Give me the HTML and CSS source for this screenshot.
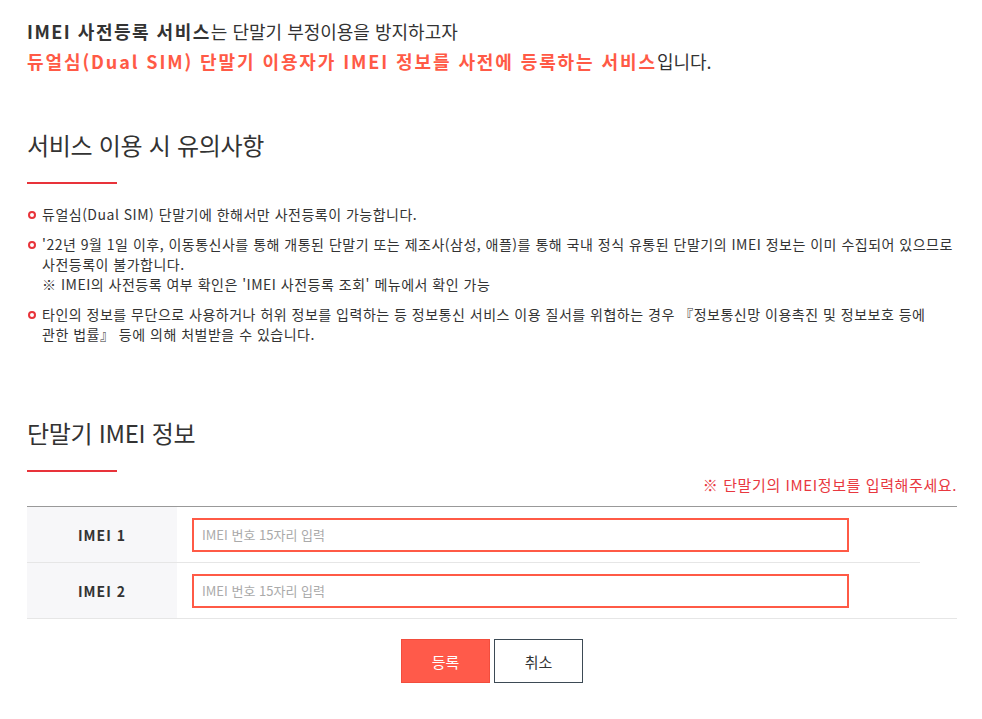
FILE: index.html
```html
<!DOCTYPE html>
<html lang="ko">
<head>
  <meta charset="UTF-8">
  <meta name="viewport" content="width=device-width, initial-scale=1">
  <title>IMEI 사전등록</title>
  <link rel="stylesheet" href="styles.css">
</head>
<body>

  <div class="content">
    <p class="intro">
      <strong>IMEI 사전등록 서비스</strong>는 단말기 부정이용을 방지하고자<br>
      <em>듀얼심(Dual SIM) 단말기 이용자가 IMEI 정보를 사전에 등록하는 서비스</em>입니다.
    </p>

    <h3 class="tit">서비스 이용 시 유의사항</h3>
    <ul class="notice">
      <li>듀얼심(Dual SIM) 단말기에 한해서만 사전등록이 가능합니다.</li>
      <li>'22년 9월 1일 이후, 이동통신사를 통해 개통된 단말기 또는 제조사(삼성, 애플)를 통해 국내 정식 유통된 단말기의 IMEI 정보는 이미 수집되어 있으므로 사전등록이 불가합니다.<br>※ IMEI의 사전등록 여부 확인은 'IMEI 사전등록 조회' 메뉴에서 확인 가능</li>
      <li>타인의 정보를 무단으로 사용하거나 허위 정보를 입력하는 등 정보통신 서비스 이용 질서를 위협하는 경우 『정보통신망 이용촉진 및 정보보호 등에 관한&nbsp;법률』 등에 의해 처벌받을 수 있습니다.</li>
    </ul>

    <h3 class="tit tit-form">단말기 IMEI 정보</h3>
    <p class="req">※ 단말기의 IMEI정보를 입력해주세요.</p>

    <div class="form-table">
      <div class="row first">
        <label class="th" for="imei1">IMEI 1</label>
        <div class="td"><input type="text" id="imei1" placeholder="IMEI 번호 15자리 입력"></div>
      </div>
      <div class="row">
        <label class="th" for="imei2">IMEI 2</label>
        <div class="td"><input type="text" id="imei2" placeholder="IMEI 번호 15자리 입력"></div>
      </div>
    </div>

    <div class="btns">
      <button class="btn btn-red">등록</button>
      <button class="btn btn-line">취소</button>
    </div>
  </div>

</body>
</html>
```

FILE: styles.css
```css
body {
  margin: 0;
  font-family: "Noto Sans CJK KR", "Noto Sans", sans-serif;
  color: #333;
  background: #fff;
  word-break: keep-all;
}

.content {
  width: 930px;
  padding: 16px 27px 0;
}

.intro {
  margin: 0;
  font-size: 18px;
  line-height: 30px;
  color: #333;
}

.intro strong {
  font-weight: 700;
  letter-spacing: 1.5px;
}

.intro em {
  font-style: normal;
  font-weight: 700;
  letter-spacing: 1.9px;
  color: #ff5a46;
}

.tit {
  margin: 51px 0 0;
  font-size: 24px;
  font-weight: 400;
  line-height: 36px;
  letter-spacing: -0.3px;
  color: #333;
}

.tit::after {
  content: "";
  display: block;
  width: 90px;
  height: 2px;
  margin-top: 19px;
  background: #e8333a;
}

.tit-form {
  margin-top: 71px;
}

.notice {
  list-style: none;
  margin: 20px 0 0;
  padding: 0;
  font-size: 14px;
  line-height: 20px;
  letter-spacing: 0.5px;
  color: #333;
}

.notice li {
  position: relative;
  padding-left: 15px;
  margin-bottom: 10px;
}

.notice li::before {
  content: "";
  position: absolute;
  left: 1px;
  top: 7px;
  width: 4px;
  height: 4px;
  border: 2px solid #e8333a;
  border-radius: 50%;
}

.req {
  margin: 3px 0 0;
  text-align: right;
  font-size: 15px;
  line-height: 20px;
  letter-spacing: 0.6px;
  color: #e8383f;
}

.form-table {
  margin-top: 11px;
  border-top: 1px solid #999;
}

.row {
  display: flex;
  height: 55px;
  border-bottom: 1px solid #e6e6e6;
}

.row.first {
  margin-right: 37px;
}

.th {
  width: 150px;
  display: flex;
  align-items: center;
  justify-content: center;
  background: #f7f7f9;
  font-size: 14px;
  font-weight: 700;
  letter-spacing: 1px;
  color: #333;
}

.td {
  flex: 1;
  display: flex;
  align-items: center;
  padding-left: 15px;
}

.td input {
  box-sizing: border-box;
  width: 657px;
  height: 34px;
  padding: 0 8px;
  border: 2px solid #ff5a46;
  outline: none;
  font-family: inherit;
  font-size: 13px;
  color: #333;
}

.td input::placeholder {
  color: #aaa;
}

.btns {
  display: flex;
  justify-content: center;
  gap: 4px;
  margin-top: 20px;
}

.btn {
  width: 89px;
  height: 44px;
  font-family: inherit;
  font-size: 15px;
  cursor: pointer;
}

.btn-red {
  background: #ff5a4a;
  border: 1px solid #f24d3d;
  color: #fff;
}

.btn-line {
  background: #fff;
  border: 1px solid #3d4a55;
  color: #333;
}
```
